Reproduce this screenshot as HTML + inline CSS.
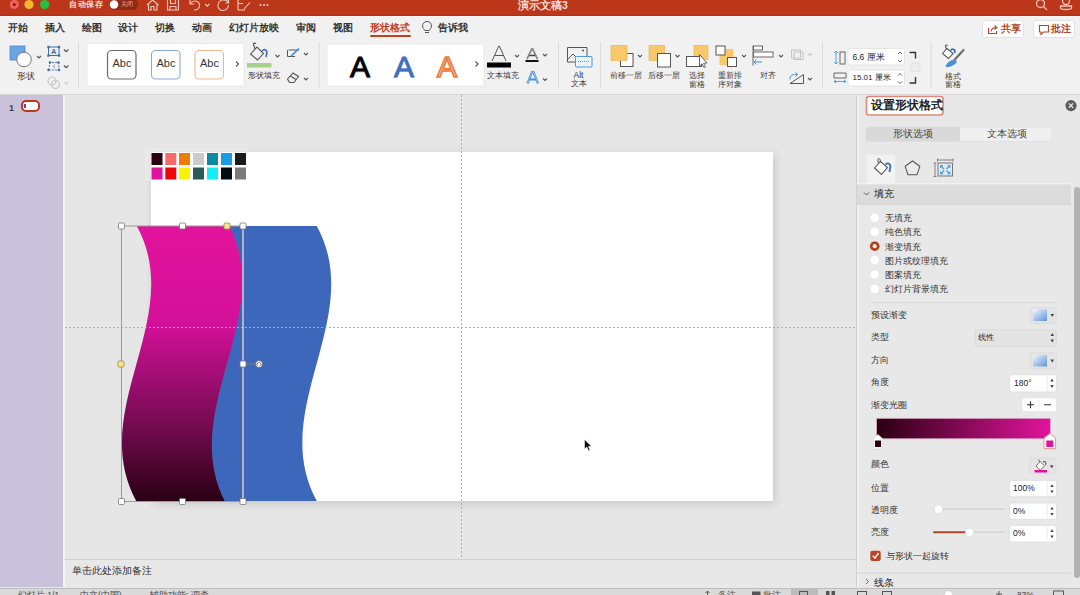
<!DOCTYPE html>
<html><head><meta charset="utf-8">
<style>
*{margin:0;padding:0;box-sizing:border-box}
html,body{width:1080px;height:595px;overflow:hidden;background:#e6e6e6;font-family:"Liberation Sans",sans-serif;color:#333}
.a{position:absolute}
.t{position:absolute;white-space:nowrap;line-height:1}
#title{left:0;top:0;width:1080px;height:16px;background:#bc371a;border-bottom:1px solid #a9321c}
#tabs{left:0;top:16px;width:1080px;height:24px;background:#f1f1f1;border-top:1px solid #fdf6f5}
#ribbon{left:0;top:40px;width:1080px;height:55px;background:#f1f1f1;border-bottom:1px solid #d6d6d6}
#thumbs{left:0;top:95px;width:63px;height:492px;background:#cac2da}
#thumbline{left:63px;top:95px;width:2px;height:492px;background:#f4f4f4}
#canvas{left:65px;top:95px;width:793px;height:463px;background:#e6e6e6}
#notes{left:65px;top:558.5px;width:791px;height:29px;background:#e8e8e8;border-top:1px solid #d0d0d0}
#status{left:0;top:587.5px;width:1080px;height:8px;background:#dadada;border-top:1px solid #bdbdbd}
#pane{left:856px;top:95px;width:224px;height:492px;background:#e8e8e8;border-left:1px solid #d2d2d2;box-shadow:inset 2px 0 0 #efefef}
#slide{left:151px;top:152px;width:622px;height:349px;background:#fff;box-shadow:2px 3px 9px rgba(0,0,0,.13)}
</style></head><body>
<div class="a" id="title">
<svg class="a" style="left:0;top:0" width="1080" height="16">
<circle cx="14.3" cy="4.5" r="4.6" fill="#f0605a"/><circle cx="14.3" cy="4.5" r="1.6" fill="#8a1a14"/>
<circle cx="29" cy="4.5" r="4.6" fill="#f6b52d"/>
<circle cx="44.6" cy="4.5" r="4.6" fill="#27c03f"/>
<rect x="109" y="-1" width="29" height="11" rx="5.5" fill="#8e2a17"/>
<circle cx="114" cy="4.5" r="4.3" fill="#fff"/>
<g fill="none" stroke="#f2c9bf" stroke-width="1.1">
<path d="M147,5 L152.5,0 L158.5,5 M148.5,4 L148.5,10 L151,10 L151,6.5 L154,6.5 L154,10 L157,10 L157,4"/>
<path d="M167.5,0 L167.5,10 L178.5,10 L178.5,0 M170.5,0 L170.5,3.5 L175.5,3.5 L175.5,0 M170,10 L170,6.5 L176,6.5 L176,10"/>
<path d="M190,0 L190,4 L194,4 M190,3.5 C194,-1 200,1 199.5,6 C199,9 196,10 194,10"/>
<path d="M205,4 L207.2,6.2 L209.4,4"/>
<path d="M228,2 C226,-1 219,-1 218,4.5 C217.5,8 220,10.5 223,10.5 C226,10.5 228.5,8 228.5,5 M228.5,0 L228.5,3 L225.5,3"/>
<path d="M238,0 L238,10 L245,10 M238,3.5 L243,3.5 M244,9 L250,2.5"/>
</g>
<g fill="#f2c9bf"><circle cx="260.5" cy="5" r="1.1"/><circle cx="264" cy="5" r="1.1"/><circle cx="267.5" cy="5" r="1.1"/></g>
<g fill="none" stroke="#f2c9bf" stroke-width="1.3"><circle cx="1040.5" cy="3.5" r="4"/><path d="M1043.5,6.5 L1047,10"/>
<circle cx="1066" cy="1" r="3.5"/><path d="M1060.5,6 L1060.5,8 C1060.5,10 1071.5,10 1071.5,8 L1071.5,6 Z"/></g>
</svg>
<div class="t" style="left:69px;top:0px;font-size:8.4px;color:#f8ddd5;font-weight:600;width:4em;text-align-last:justify">自动保存</div>
<div class="t" style="left:121px;top:1px;font-size:6px;color:#e8b8ac;width:2em;text-align-last:justify">关闭</div>
<div class="t" style="left:518px;top:-0.5px;font-size:10.5px;font-weight:bold;color:#f7ddd6">演示文稿3</div>
</div>
<div class="a" id="tabs">
<div class="t" style="left:8px;top:5.5px;font-size:10px;color:#333;font-weight:600;width:2em;text-align-last:justify">开始</div>
<div class="t" style="left:45px;top:5.5px;font-size:10px;color:#333;font-weight:600;width:2em;text-align-last:justify">插入</div>
<div class="t" style="left:82px;top:5.5px;font-size:10px;color:#333;font-weight:600;width:2em;text-align-last:justify">绘图</div>
<div class="t" style="left:118px;top:5.5px;font-size:10px;color:#333;font-weight:600;width:2em;text-align-last:justify">设计</div>
<div class="t" style="left:155px;top:5.5px;font-size:10px;color:#333;font-weight:600;width:2em;text-align-last:justify">切换</div>
<div class="t" style="left:192px;top:5.5px;font-size:10px;color:#333;font-weight:600;width:2em;text-align-last:justify">动画</div>
<div class="t" style="left:229px;top:5.5px;font-size:10px;color:#333;font-weight:600;width:5em;text-align-last:justify">幻灯片放映</div>
<div class="t" style="left:296px;top:5.5px;font-size:10px;color:#333;font-weight:600;width:2em;text-align-last:justify">审阅</div>
<div class="t" style="left:333px;top:5.5px;font-size:10px;color:#333;font-weight:600;width:2em;text-align-last:justify">视图</div>
<div class="t" style="left:369.5px;top:5.5px;font-size:10px;color:#c3401f;font-weight:bold;width:4em;text-align-last:justify">形状格式</div>
<div class="a" style="left:369.5px;top:18px;width:41px;height:2px;background:#c3401f;border-radius:1px"></div>
<svg class="a" style="left:420px;top:3px" width="14" height="16"><path d="M7,1.5 C4,1.5 2.5,3.8 2.5,6 C2.5,8 4.2,9 4.8,10.5 L9.2,10.5 C9.8,9 11.5,8 11.5,6 C11.5,3.8 10,1.5 7,1.5 Z M5,12.5 L9,12.5" fill="none" stroke="#555" stroke-width="1"/></svg>
<div class="t" style="left:438px;top:5.5px;font-size:10px;color:#333;font-weight:600;width:3em;text-align-last:justify">告诉我</div>
<div class="a" style="left:982px;top:2.5px;width:42px;height:18px;background:#fff;border:1px solid #e2e2e2;border-radius:3px"></div>
<svg class="a" style="left:987px;top:7px" width="12" height="11"><path d="M1.5,4 L1.5,9.5 L9.5,9.5 L9.5,7 M4,7.5 C4.5,4.5 6.5,3.5 9,3.5 M7.5,1.5 L10,3.5 L7.5,5.5" fill="none" stroke="#b5452a" stroke-width="1.1"/></svg>
<div class="t" style="left:1001px;top:6.5px;font-size:10px;color:#b5452a;font-weight:bold;width:2em;text-align-last:justify">共享</div>
<div class="a" style="left:1033px;top:2.5px;width:42px;height:18px;background:#fff;border:1px solid #e2e2e2;border-radius:3px"></div>
<svg class="a" style="left:1038px;top:6.5px" width="12" height="12"><path d="M1.5,1.5 L10.5,1.5 L10.5,8 L5.5,8 L3,10.5 L3,8 L1.5,8 Z" fill="none" stroke="#b5452a" stroke-width="1.1"/></svg>
<div class="t" style="left:1051px;top:6.5px;font-size:10px;color:#b5452a;font-weight:bold;width:2em;text-align-last:justify">批注</div>
</div>
<div class="a" id="ribbon">
<svg class="a" style="left:0;top:0" width="1080" height="54">
<!-- shapes -->
<rect x="10" y="6" width="15" height="14" fill="#6aa5e6" stroke="#4f86c8" stroke-width="0.8"/>
<circle cx="24" cy="19.5" r="7.3" fill="#fff" stroke="#777" stroke-width="1"/>
<path d="M37,16 L39,18 L41,16" fill="none" stroke="#555" stroke-width="1.1"/>
<rect x="48.5" y="7" width="10.5" height="8.5" fill="none" stroke="#3f6fa8" stroke-width="1"/>
<g fill="#3f6fa8"><rect x="47.3" y="5.8" width="2.4" height="2.4"/><rect x="57.8" y="5.8" width="2.4" height="2.4"/><rect x="47.3" y="14.3" width="2.4" height="2.4"/><rect x="57.8" y="14.3" width="2.4" height="2.4"/></g>
<text x="51" y="14" font-size="7.5" fill="#3f6fa8" font-family="Liberation Sans" font-weight="bold">A</text>
<path d="M64,9.5 L66.2,11.7 L68.4,9.5" fill="none" stroke="#555" stroke-width="1.2"/>
<path d="M48.5,30 L50,22.5 L58.5,22.5 L59,30 Z" fill="none" stroke="#3f6fa8" stroke-width="0.9" stroke-dasharray="2,1.2"/>
<path d="M55,25 C53,25.5 53,27.5 55,28" fill="none" stroke="#3f6fa8" stroke-width="0.8"/>
<g fill="#3f6fa8"><circle cx="48.5" cy="30" r="1.3"/><circle cx="59" cy="30" r="1.3"/><circle cx="50" cy="22.5" r="1.3"/><circle cx="58.5" cy="22.5" r="1.3"/></g>
<path d="M64,25.5 L66.2,27.7 L68.4,25.5" fill="none" stroke="#555" stroke-width="1.2"/>
<g fill="none" stroke="#c4c4c4" stroke-width="1.2"><circle cx="52" cy="41" r="4"/><circle cx="55.5" cy="44.5" r="4"/></g>
<path d="M64,42 L66.2,44.2 L68.4,42" fill="none" stroke="#cfcfcf" stroke-width="1.2"/>
<line x1="78.5" y1="2" x2="78.5" y2="48" stroke="#dcdcdc"/>
<!-- gallery -->
<rect x="87" y="3.5" width="157" height="42.5" fill="#fff" stroke="#e6e6e6" stroke-width="0.8"/>
<rect x="107.5" y="10.5" width="28.5" height="28.5" rx="4" fill="#fff" stroke="#6b6b6b" stroke-width="1.2"/>
<rect x="151.5" y="10.5" width="28.5" height="28.5" rx="4" fill="#fff" stroke="#8aa8d4" stroke-width="1.1"/>
<rect x="195" y="10.5" width="28.5" height="28.5" rx="4" fill="#fff" stroke="#f0b68c" stroke-width="1.1"/>
<path d="M236,21.5 L238.5,24 L236,26.5" fill="none" stroke="#555" stroke-width="1.1"/>
<!-- shape fill -->
<path d="M250.5,14 L257,7 L263.5,13.5 L257.5,20 Z M255,9 L253.5,4.5 C253,3 255,2.5 255.7,4" fill="none" stroke="#555" stroke-width="1.1"/>
<path d="M262,11 C265,8 268,11 266.5,14.5 L266,17" fill="none" stroke="#3d6fb5" stroke-width="1.6"/>
<rect x="247" y="23" width="24.5" height="4.5" fill="#a7d18b"/>
<path d="M275.5,15 L277.5,17 L279.5,15" fill="none" stroke="#555" stroke-width="1.1"/>
<path d="M287.5,10 L287.5,16.5 L295,16.5 M288.5,10 L299,10 M292,15.5 L298,9" fill="none" stroke="#555" stroke-width="1"/>
<path d="M291,16 L299,8.5" stroke="#3d8fd8" stroke-width="1.6"/>
<path d="M304,13 L306,15 L308,13" fill="none" stroke="#555" stroke-width="1.1"/>
<path d="M287.5,39 L293,33 L298.5,36.5 L294,42.5 L289.5,42.5 Z M290.5,36 L296,39.5" fill="none" stroke="#555" stroke-width="1.1"/>
<path d="M304,38 L306,40 L308,38" fill="none" stroke="#555" stroke-width="1.1"/>
<line x1="319" y1="2" x2="319" y2="48" stroke="#dcdcdc"/>
<!-- wordart -->
<rect x="327" y="4" width="157" height="42" fill="#fff" stroke="#e6e6e6" stroke-width="0.8"/>
<path d="M475.5,21.5 L478,24 L475.5,26.5" fill="none" stroke="#555" stroke-width="1.1"/>
<path d="M492,21 L498.8,6 L499.4,6 L506,21 M494.5,15.5 L503.5,15.5" fill="none" stroke="#444" stroke-width="0.9"/>
<rect x="487" y="22.5" width="24" height="5" fill="#000"/>
<path d="M515,15 L517,17 L519,15" fill="none" stroke="#555" stroke-width="1.1"/>
<path d="M527,19 L531.8,9 L532.6,9 L537.5,19 M528.8,15.5 L535.8,15.5" fill="none" stroke="#444" stroke-width="1.6"/>
<path d="M527,19 L531.8,9 L532.6,9 L537.5,19" fill="none" stroke="#fff" stroke-width="0.5"/>
<rect x="525.5" y="20" width="13" height="2" fill="#111"/>
<path d="M543,14 L545,16 L547,14" fill="none" stroke="#555" stroke-width="1.1"/>
<path d="M527.5,43.5 L532,32 L533.5,32 L538,43.5 M529.5,39.5 L536,39.5" fill="none" stroke="#4a90d9" stroke-width="2.2"/>
<path d="M527.5,43.5 L532,32 L533.5,32 L538,43.5" fill="none" stroke="#bfe0ff" stroke-width="0.6"/>
<path d="M543,38.5 L545,40.5 L547,38.5" fill="none" stroke="#555" stroke-width="1.1"/>
<line x1="558.5" y1="2" x2="558.5" y2="48" stroke="#dcdcdc"/>
<!-- alt text -->
<path d="M567.5,7.5 L587,7.5 L587,17 M567.5,7.5 L567.5,22 L576,22 M568,19 L573,14 L577,18" fill="none" stroke="#555" stroke-width="1"/>
<circle cx="583" cy="10.5" r="1" fill="#555"/>
<rect x="575.5" y="16.5" width="16.5" height="10.5" rx="1" fill="#e9f3fb" stroke="#4f9ad5" stroke-width="1"/>
<path d="M578,21.5 L590,21.5" stroke="#4f9ad5" stroke-width="1" stroke-dasharray="1,1"/>
<line x1="600.5" y1="2" x2="600.5" y2="48" stroke="#dcdcdc"/>
<!-- bring forward -->
<rect x="620.5" y="13.5" width="12.5" height="13" fill="#fff" stroke="#555" stroke-width="1"/>
<rect x="611" y="5.5" width="16" height="15" fill="#f8c86a" stroke="#e6b04c" stroke-width="0.6"/>
<path d="M638,15 L640,17 L642,15" fill="none" stroke="#555" stroke-width="1.1"/>
<!-- send backward -->
<rect x="649" y="5.5" width="15.5" height="15" fill="#f8c86a" stroke="#e6b04c" stroke-width="0.6"/>
<rect x="657.5" y="13.5" width="13" height="13.5" fill="#fff" stroke="#555" stroke-width="1"/>
<path d="M675.5,15 L677.5,17 L679.5,15" fill="none" stroke="#555" stroke-width="1.1"/>
<!-- selection pane -->
<rect x="694" y="5.5" width="14" height="14" fill="#f8c86a" stroke="#e6b04c" stroke-width="0.6"/>
<rect x="686.5" y="16.5" width="15" height="10" fill="#fff" stroke="#555" stroke-width="1"/>
<path d="M699.5,14.5 L699.5,26 L702,23.8 L704,27.5 L705.5,26.8 L703.6,23.2 L707,23 Z" fill="#fff" stroke="#555" stroke-width="0.9"/>
<!-- reorder -->
<rect x="719.5" y="9" width="14" height="16" fill="#f8c86a"/>
<rect x="716" y="6" width="9" height="9" fill="#fff" stroke="#555" stroke-width="1"/>
<rect x="727.5" y="17.5" width="9" height="9" fill="#fff" stroke="#555" stroke-width="1"/>
<path d="M742,15 L744,17 L746,15" fill="none" stroke="#555" stroke-width="1.1"/>
<!-- align -->
<path d="M753,5.5 L753,25.5" stroke="#666" stroke-width="1"/>
<rect x="753.5" y="6" width="9" height="4" fill="#fff" stroke="#666" stroke-width="1"/>
<rect x="753.5" y="12" width="19.5" height="5" fill="#fff" stroke="#666" stroke-width="1"/>
<path d="M754,22 L762,22 M756.5,19.5 L754,22 L756.5,24.5" fill="none" stroke="#4a8fd6" stroke-width="1"/>
<path d="M779,15 L781,17 L783,15" fill="none" stroke="#555" stroke-width="1.1"/>
<!-- group -->
<g fill="none" stroke="#c4c4c4" stroke-width="1"><rect x="791.5" y="10" width="9" height="8"/><rect x="794" y="12" width="9" height="7.5"/></g>
<path d="M808,13.5 L810,15.5 L812,13.5" fill="none" stroke="#c8c8c8" stroke-width="1.1"/>
<!-- rotate -->
<path d="M790,43.5 L803.5,43.5 L803.5,34.5 Z" fill="none" stroke="#555" stroke-width="1"/>
<path d="M790,39.5 C790,35 793,34 797.5,34.5 M795.5,32.5 L797.8,34.5 L795.5,36.5" fill="none" stroke="#4a8fd6" stroke-width="1"/>
<path d="M808,38 L810,40 L812,38" fill="none" stroke="#555" stroke-width="1.1"/>
<line x1="822.5" y1="2" x2="822.5" y2="48" stroke="#dcdcdc"/>
<!-- size -->
<g fill="none" stroke="#666" stroke-width="1"><rect x="840" y="12" width="5" height="12"/></g>
<path d="M836,11 L836,24 M834,13 L836,11 L838,13 M834,22 L836,24 L838,22" fill="none" stroke="#4a9ad8" stroke-width="0.9"/>
<g fill="none" stroke="#666" stroke-width="1"><path d="M834,33 L846,33 M834,38 L846,38 M834,33 L834,38 M846,33 L846,38"/></g>
<path d="M834,41.5 L846,41.5 M836,40 L834,41.5 L836,43 M844,40 L846,41.5 L844,43" fill="none" stroke="#4a9ad8" stroke-width="0.9"/>
<rect x="848" y="8.5" width="56.5" height="16.5" rx="2" fill="#fff" stroke="#e0e0e0" stroke-width="0.8"/>
<rect x="848" y="30" width="56.5" height="16" rx="2" fill="#fff" stroke="#e0e0e0" stroke-width="0.8"/>
<path d="M898,14 L900,12 L902,14 M898,20 L900,22 L902,20 M898,35.5 L900,33.5 L902,35.5 M898,41.5 L900,43.5 L902,41.5" fill="none" stroke="#555" stroke-width="0.9"/>
<path d="M909.5,12.5 L915.5,12.5 L915.5,18.5 M909.5,43 L915.5,43 L915.5,37" fill="none" stroke="#333" stroke-width="1.4"/>
<rect x="910.5" y="23" width="9.5" height="8.5" rx="2" fill="#ececec" stroke="#dedede" stroke-width="0.8"/>
<line x1="931" y1="2" x2="931" y2="48" stroke="#dcdcdc"/>
<!-- format pane -->
<path d="M942.5,13.5 L947,8.5 L953,13.5 L948.5,18.5 Z M946.5,9.5 L945.5,6 C945.3,5 947,4.5 947.5,5.8" fill="#fff" stroke="#555" stroke-width="1.1"/>
<path d="M950.5,10.5 C952.5,8 956,9.5 954.5,13" fill="none" stroke="#3d6fb5" stroke-width="1.7"/>
<path d="M963.5,10 L953.5,21" stroke="#6e6e6e" stroke-width="2.2" stroke-linecap="round"/>
<path d="M955,19.5 C950,20 946,23 945.5,27 C950,27.5 955,25 957,22 Z" fill="#4f8fd0"/>
</svg>
<div class="t" style="left:17px;top:32px;font-size:8.5px;color:#3a3a3a;font-weight:500;width:2em;text-align-last:justify">形状</div>
<div class="t" style="left:112.5px;top:18px;font-size:11px;color:#333;font-family:'Liberation Sans'">Abc</div>
<div class="t" style="left:156.5px;top:18px;font-size:11px;color:#333;font-family:'Liberation Sans'">Abc</div>
<div class="t" style="left:200.0px;top:18px;font-size:11px;color:#333;font-family:'Liberation Sans'">Abc</div>
<div class="t" style="left:248px;top:32px;font-size:7.8px;color:#3a3a3a;font-weight:500;width:4em;text-align-last:justify">形状填充</div>
<div class="t" style="left:350px;top:12px;font-size:30px;color:#000;font-family:'Liberation Sans';-webkit-text-stroke:.9px #000;text-shadow:0 1px 2px rgba(0,0,0,.35)">A</div>
<div class="t" style="left:394px;top:12px;font-size:30px;color:#3f6fc0;font-family:'Liberation Sans';-webkit-text-stroke:.9px #3f6fc0;text-shadow:0 1px 1px rgba(0,0,0,.2)">A</div>
<div class="t" style="left:437px;top:12px;font-size:30px;color:#f9c6a2;font-family:'Liberation Sans';-webkit-text-stroke:1.6px #ee7a3c">A</div>
<div class="t" style="left:487px;top:31.5px;font-size:7.8px;color:#3a3a3a;font-weight:500;width:4em;text-align-last:justify">文本填充</div>
<div class="t" style="left:573.5px;top:31px;font-size:8.5px;color:#333;font-family:'Liberation Sans'">Alt</div>
<div class="t" style="left:571px;top:40px;font-size:8px;color:#3a3a3a;font-weight:500;width:2em;text-align-last:justify">文本</div>
<div class="t" style="left:610px;top:32px;font-size:7.8px;color:#3a3a3a;font-weight:500;width:4em;text-align-last:justify">前移一层</div>
<div class="t" style="left:647.5px;top:32px;font-size:7.8px;color:#3a3a3a;font-weight:500;width:4em;text-align-last:justify">后移一层</div>
<div class="t" style="left:689px;top:32px;font-size:7.8px;color:#3a3a3a;font-weight:500;width:2em;text-align-last:justify">选择</div>
<div class="t" style="left:689px;top:40.5px;font-size:7.8px;color:#3a3a3a;font-weight:500;width:2em;text-align-last:justify">窗格</div>
<div class="t" style="left:718px;top:32px;font-size:7.8px;color:#3a3a3a;font-weight:500;width:3em;text-align-last:justify">重新排</div>
<div class="t" style="left:718px;top:40.5px;font-size:7.8px;color:#3a3a3a;font-weight:500;width:3em;text-align-last:justify">序对象</div>
<div class="t" style="left:760px;top:32px;font-size:7.8px;color:#3a3a3a;font-weight:500;width:2em;text-align-last:justify">对齐</div>
<div class="t" style="left:852.5px;top:12.5px;font-size:8.5px;color:#222;font-weight:500">6.6 厘米</div>
<div class="t" style="left:852.5px;top:33.5px;font-size:8px;color:#222;font-weight:500">15.01 厘米</div>
<div class="t" style="left:944.5px;top:32.5px;font-size:7.8px;color:#3a3a3a;font-weight:500;width:2em;text-align-last:justify">格式</div>
<div class="t" style="left:944.5px;top:41px;font-size:7.8px;color:#3a3a3a;font-weight:500;width:2em;text-align-last:justify">窗格</div>
</div>
<div class="a" id="thumbs"></div>
<div class="a" id="thumbline"></div>
<div class="a" id="canvas"></div>
<div class="a" id="slide"></div>
<svg class="a" style="left:0;top:0" width="1080" height="595" viewBox="0 0 1080 595">
<defs><linearGradient id="mg" x1="0" y1="0" x2="0" y2="1">
<stop offset="0" stop-color="#e2139c"/><stop offset="0.35" stop-color="#d4109a"/><stop offset="0.75" stop-color="#6e0a4c"/><stop offset="1" stop-color="#2a0012"/></linearGradient></defs>
<rect x="145" y="148" width="103" height="33" fill="#fff" opacity=".22"/><rect x="151" y="152" width="97" height="29" fill="#fff"/>
<g>
<rect x="151.5" y="153" width="11" height="12" fill="#2c0213"/>
<rect x="165.3" y="153" width="11" height="12" fill="#f56b6b"/>
<rect x="179" y="153" width="11" height="12" fill="#ef7a06"/>
<rect x="193" y="153" width="11" height="12" fill="#c9cbcc"/>
<rect x="207" y="153" width="11" height="12" fill="#0c8aa2"/>
<rect x="221" y="153" width="11" height="12" fill="#1a9be9"/>
<rect x="235" y="153" width="11" height="12" fill="#1b1b1b"/>
<rect x="151.5" y="167.5" width="11" height="12" fill="#e0129f"/>
<rect x="165.3" y="167.5" width="11" height="12" fill="#ee0505"/>
<rect x="179" y="167.5" width="11" height="12" fill="#fbf200"/>
<rect x="193" y="167.5" width="11" height="12" fill="#2b5a5a"/>
<rect x="207" y="167.5" width="11" height="12" fill="#12eef6"/>
<rect x="221" y="167.5" width="11" height="12" fill="#050b12"/>
<rect x="235" y="167.5" width="11" height="12" fill="#7a7a7a"/>
</g>
<path d="M210,226 C260,317.7 160,409.3 210,501 L316.8,501 C266.8,409.3 366.8,317.7 316.8,226 Z" fill="#3d67bb"/>
<path d="M136.8,226 C186.8,317.7 86.5,409.3 136.2,501 L224.6,501 C178.6,409.3 275.4,317.7 229.4,226 Z" fill="url(#mg)"/>
<g stroke="#b0b0b0" stroke-width="1" stroke-dasharray="2,2" fill="none">
<line x1="461.5" y1="95" x2="461.5" y2="558"/>
<line x1="65" y1="327.5" x2="856" y2="327.5"/>
</g>
<g fill="none" stroke="#9a9a9a" stroke-width="1">
<rect x="121.5" y="226" width="121.5" height="275.5"/>
</g>
<line x1="243" y1="226" x2="243" y2="501" stroke="#d8d8d8" stroke-width="1.2"/>
<line x1="243" y1="364" x2="256" y2="364" stroke="#888" stroke-width="0.8"/>
<g fill="#fff" stroke="#777" stroke-width="0.8">
<rect x="118.5" y="223" width="6" height="6" rx="1"/>
<rect x="179.5" y="223" width="6" height="6" rx="1"/>
<rect x="240" y="223" width="6" height="6" rx="1"/>
<rect x="118.5" y="498.5" width="6" height="6" rx="1"/>
<rect x="179.5" y="498.5" width="6" height="6" rx="1"/>
<rect x="240" y="498.5" width="6" height="6" rx="1"/>
<rect x="240" y="361" width="6" height="6" rx="1"/>
</g>
<g fill="#fde08a" stroke="#a08a50" stroke-width="0.8">
<rect x="118" y="361" width="6" height="6" rx="1"/>
<rect x="224" y="223" width="6" height="6" rx="1"/>
</g>
<circle cx="259" cy="364" r="3.5" fill="#fff" stroke="#666" stroke-width="0.9"/>
<path d="M257.5,365.5 a1.8,1.8 0 1 1 2.5,0.3" fill="none" stroke="#555" stroke-width="0.8"/>
<path d="M584.5,439.5 L584.5,449 L586.8,447 L588.5,450.8 L590,450.2 L588.4,446.5 L591.5,446.3 Z" fill="#111" stroke="#fff" stroke-width="0.5"/>
</svg>
<div class="a" id="notes"></div>
<div class="a" id="pane"></div>
<svg class="a" style="left:0;top:0" width="1080" height="595">
<rect x="866.5" y="96.5" width="76.5" height="18.5" rx="2.5" fill="#fff" stroke="#d98a78" stroke-width="1.6"/>
<circle cx="1071" cy="105.6" r="5.6" fill="#5c5c5c"/>
<path d="M1068.8,103.4 L1073.2,107.8 M1073.2,103.4 L1068.8,107.8" stroke="#e8e8e8" stroke-width="1.3"/>
<rect x="866" y="127" width="186" height="14.5" rx="2" fill="#efefef" stroke="#dedede" stroke-width="0.7"/>
<rect x="866" y="127" width="94" height="14.5" rx="2" fill="#d9d9d9"/>
<rect x="867" y="155" width="28" height="29" fill="#f2f2f2"/>
<path d="M874.5,168 L880.5,161.5 L887.5,167.5 L881.5,174.5 Z" fill="#fff" stroke="#555" stroke-width="1.1"/>
<path d="M878.5,163.5 L877.8,159.8 C877.5,158.5 879.5,158 880,159.5 L880.6,161.8" fill="none" stroke="#555" stroke-width="1"/>
<path d="M885.5,164.5 C888.5,162 891.5,164.5 890,168.5 L889.5,172" fill="none" stroke="#3d6fb5" stroke-width="1.8"/>
<path d="M912.5,161 L919.8,166.3 L917,174.8 L908,174.8 L905.2,166.3 Z" fill="#fff" fill-opacity=".15" stroke="#555" stroke-width="1.1"/>
<rect x="938" y="163" width="14.5" height="13" fill="#dfeaf3" stroke="#777" stroke-width="1"/>
<path d="M937.5,160 L953,160 M937.5,158.5 L937.5,161.5 M953,158.5 L953,161.5 M935,163 L935,176.5 M933.5,163 L936.5,163 M933.5,176.5 L936.5,176.5" fill="none" stroke="#777" stroke-width="0.9"/>
<path d="M941,166 L944,169 M949.5,166 L946.5,169 M941,173.5 L944,170.5 M949.5,173.5 L946.5,170.5" stroke="#3f9ad6" stroke-width="1.2"/>
<path d="M940.5,168 L940.5,165.5 L943,165.5 M950,168 L950,165.5 L947.5,165.5 M940.5,171.5 L940.5,174 L943,174 M950,171.5 L950,174 L947.5,174" fill="none" stroke="#3f9ad6" stroke-width="0.9"/>
<line x1="857" y1="183.8" x2="1071" y2="183.8" stroke="#f7f7f7" stroke-width="1"/>
<rect x="857" y="184.5" width="214" height="20" fill="#dcdcdc"/>
<line x1="857" y1="204.2" x2="1071" y2="204.2" stroke="#cfcfcf" stroke-width="0.8"/>
<path d="M864,192.5 L866.5,195 L869,192.5" fill="none" stroke="#555" stroke-width="1"/>
<rect x="1074" y="187" width="6" height="391" rx="3" fill="#b3b3b3"/>
<g fill="#fff" stroke="#e0e0e0" stroke-width="0.5">
<circle cx="874.7" cy="217.8" r="4.6"/><circle cx="874.7" cy="231.8" r="4.6"/>
<circle cx="874.7" cy="260.1" r="4.6"/><circle cx="874.7" cy="274.5" r="4.6"/><circle cx="874.7" cy="288.9" r="4.6"/>
</g>
<circle cx="874.7" cy="246.2" r="4.8" fill="#b53c1f"/><circle cx="874.7" cy="246.2" r="2.1" fill="#fff6d8"/>
<line x1="870" y1="302.5" x2="1056" y2="302.5" stroke="#d8d8d8" stroke-width="0.8"/>
<rect x="1030" y="307.6" width="26.4" height="15.8" rx="2.5" fill="#e4e4e4" stroke="#d6d6d6" stroke-width="0.6"/>
<defs><linearGradient id="bl" x1="0" y1="0" x2="1" y2="1"><stop offset="0" stop-color="#f0f6ff"/><stop offset="1" stop-color="#5f95d8"/></linearGradient>
<linearGradient id="gs" x1="0" y1="0" x2="1" y2="0"><stop offset="0" stop-color="#2a0012"/><stop offset="1" stop-color="#e2139c"/></linearGradient></defs>
<rect x="1033" y="309.5" width="14" height="11.5" fill="url(#bl)"/>
<path d="M1050.5,314 L1054,314 L1052.25,317 Z" fill="#444"/>
<rect x="975" y="329.7" width="81.4" height="16.8" rx="2.5" fill="#e4e4e4" stroke="#d4d4d4" stroke-width="0.6"/>
<path d="M1050.5,336 L1054,336 L1052.25,333 Z M1050.5,339.5 L1054,339.5 L1052.25,342.5 Z" fill="#444"/>
<rect x="1030" y="352.8" width="26.4" height="16.2" rx="2.5" fill="#e4e4e4" stroke="#d6d6d6" stroke-width="0.6"/>
<rect x="1033" y="355" width="14" height="11.5" fill="url(#bl)"/>
<path d="M1050.5,359.5 L1054,359.5 L1052.25,362.5 Z" fill="#444"/>
<rect x="1009.6" y="374.8" width="46.8" height="17.2" rx="2.5" fill="#fff" stroke="#d8d8d8" stroke-width="0.7"/>
<line x1="1047" y1="376" x2="1047" y2="391" stroke="#e4e4e4" stroke-width="0.8"/>
<path d="M1050.3,381.5 L1053.7,381.5 L1052,378.5 Z M1050.3,385 L1053.7,385 L1052,388 Z" fill="#444"/>
<rect x="1022" y="398" width="34.4" height="13.6" rx="2.5" fill="#fff" stroke="#e0e0e0" stroke-width="0.6"/>
<path d="M1027,404.8 L1034,404.8 M1030.5,401.3 L1030.5,408.3 M1044,404.8 L1051,404.8" stroke="#333" stroke-width="1.1"/>
<line x1="1039" y1="400" x2="1039" y2="410" stroke="#e6e6e6" stroke-width="0.6"/>
<rect x="876.5" y="418.3" width="174" height="20.5" fill="url(#gs)" stroke="#d8b4cc" stroke-width="0.8"/>
<path d="M873.5,449 L873.5,438.5 L878,434.5 L882.5,438.5 L882.5,449 Z" fill="#fff" stroke="#d0d0d0" stroke-width="0.6"/>
<rect x="875" y="440.5" width="6" height="6.5" fill="#2a0012"/>
<path d="M1044,448.6 L1044,438 L1049.8,433.5 L1055.6,438 L1055.6,448.6 Z" fill="#fff" stroke="#e0866a" stroke-width="0.8"/>
<rect x="1046.3" y="440.5" width="7" height="6.5" fill="#e2139c"/>
<rect x="1029.7" y="457.7" width="26" height="16.1" rx="2.5" fill="#e4e4e4" stroke="#d6d6d6" stroke-width="0.6"/>
<path d="M1036,466 L1040.3,461.5 L1044.6,466 L1040.3,470 Z M1039.5,462 L1038.8,459.5" fill="#fff" stroke="#555" stroke-width="0.8"/>
<path d="M1043,462 C1045,460.5 1046.5,462.5 1045.5,465" fill="none" stroke="#3d6fb5" stroke-width="1.2"/>
<rect x="1034.5" y="470" width="12.5" height="2.5" fill="#e2139c"/>
<path d="M1050,465.2 L1053.5,465.2 L1051.75,468.2 Z" fill="#444"/>
<rect x="1009.4" y="480.4" width="47" height="16.4" rx="2.5" fill="#fff" stroke="#d8d8d8" stroke-width="0.7"/>
<rect x="1009.4" y="503" width="47" height="16.4" rx="2.5" fill="#fff" stroke="#d8d8d8" stroke-width="0.7"/>
<rect x="1009.4" y="525.4" width="47" height="16.6" rx="2.5" fill="#fff" stroke="#d8d8d8" stroke-width="0.7"/>
<g stroke="#e4e4e4" stroke-width="0.8"><line x1="1047" y1="481.5" x2="1047" y2="495.5"/><line x1="1047" y1="504" x2="1047" y2="518.5"/><line x1="1047" y1="526.5" x2="1047" y2="541"/></g>
<g fill="#444">
<path d="M1050.3,487 L1053.7,487 L1052,484.2 Z M1050.3,490.5 L1053.7,490.5 L1052,493.3 Z"/>
<path d="M1050.3,509.5 L1053.7,509.5 L1052,506.7 Z M1050.3,513 L1053.7,513 L1052,515.8 Z"/>
<path d="M1050.3,532 L1053.7,532 L1052,529.2 Z M1050.3,535.5 L1053.7,535.5 L1052,538.3 Z"/>
</g>
<rect x="938" y="508.3" width="67" height="1.6" rx="0.8" fill="#d6d6d6"/>
<circle cx="938.5" cy="509.2" r="4.2" fill="#fff" stroke="#d0d0d0" stroke-width="0.5"/>
<rect x="933" y="531.4" width="72" height="1.6" rx="0.8" fill="#d6d6d6"/>
<rect x="933" y="531.2" width="36" height="2" rx="1" fill="#b5452a"/>
<circle cx="969.5" cy="532.2" r="4.2" fill="#fff" stroke="#d0d0d0" stroke-width="0.5"/>
<rect x="870.3" y="550.7" width="10.4" height="10.4" rx="2" fill="#b94322"/>
<path d="M872.8,555.8 L875,558.2 L878.5,553" fill="none" stroke="#fff" stroke-width="1.4"/>
<line x1="857" y1="573" x2="1071" y2="573" stroke="#d0d0d0" stroke-width="0.8"/>
<path d="M866,579 L868.5,581.5 L866,584" fill="none" stroke="#666" stroke-width="1"/>
</svg>
<div class="t" style="left:870.5px;top:100px;font-size:11.5px;color:#222;font-weight:bold;width:6em;text-align-last:justify">设置形状格式</div>
<div class="t" style="left:893px;top:129px;font-size:9.5px;color:#444;font-weight:500;width:4em;text-align-last:justify">形状选项</div>
<div class="t" style="left:987px;top:129px;font-size:9.5px;color:#444;font-weight:500;width:4em;text-align-last:justify">文本选项</div>
<div class="t" style="left:874px;top:189px;font-size:9.5px;color:#222;font-weight:500;width:2em;text-align-last:justify">填充</div>
<div class="t" style="left:885px;top:214px;font-size:9px;color:#333;font-weight:500;width:3em;text-align-last:justify">无填充</div>
<div class="t" style="left:885px;top:228px;font-size:9px;color:#333;font-weight:500;width:4em;text-align-last:justify">纯色填充</div>
<div class="t" style="left:885px;top:242.5px;font-size:9px;color:#333;font-weight:500;width:4em;text-align-last:justify">渐变填充</div>
<div class="t" style="left:885px;top:256.5px;font-size:9px;color:#333;font-weight:500;width:7em;text-align-last:justify">图片或纹理填充</div>
<div class="t" style="left:885px;top:271px;font-size:9px;color:#333;font-weight:500;width:4em;text-align-last:justify">图案填充</div>
<div class="t" style="left:885px;top:285px;font-size:9px;color:#333;font-weight:500;width:7em;text-align-last:justify">幻灯片背景填充</div>
<div class="t" style="left:870.5px;top:310.5px;font-size:9px;color:#333;font-weight:500;width:4em;text-align-last:justify">预设渐变</div>
<div class="t" style="left:870.5px;top:333px;font-size:9px;color:#333;font-weight:500;width:2em;text-align-last:justify">类型</div>
<div class="t" style="left:978px;top:333.5px;font-size:8px;color:#222;font-weight:500;width:2em;text-align-last:justify">线性</div>
<div class="t" style="left:870.5px;top:356px;font-size:9px;color:#333;font-weight:500;width:2em;text-align-last:justify">方向</div>
<div class="t" style="left:870.5px;top:378px;font-size:9px;color:#333;font-weight:500;width:2em;text-align-last:justify">角度</div>
<div class="t" style="left:1014px;top:378.5px;font-size:8.5px;color:#222">180°</div>
<div class="t" style="left:870.5px;top:400.5px;font-size:9px;color:#333;font-weight:500;width:4em;text-align-last:justify">渐变光圈</div>
<div class="t" style="left:870.5px;top:460px;font-size:9px;color:#333;font-weight:500;width:2em;text-align-last:justify">颜色</div>
<div class="t" style="left:870.5px;top:483.5px;font-size:9px;color:#333;font-weight:500;width:2em;text-align-last:justify">位置</div>
<div class="t" style="left:1013px;top:484px;font-size:8.5px;color:#222">100%</div>
<div class="t" style="left:870.5px;top:506px;font-size:9px;color:#333;font-weight:500;width:3em;text-align-last:justify">透明度</div>
<div class="t" style="left:1013px;top:506.5px;font-size:8.5px;color:#222">0%</div>
<div class="t" style="left:870.5px;top:528px;font-size:9px;color:#333;font-weight:500;width:2em;text-align-last:justify">亮度</div>
<div class="t" style="left:1013px;top:529px;font-size:8.5px;color:#222">0%</div>
<div class="t" style="left:885.5px;top:551.5px;font-size:9px;color:#333;font-weight:500;width:7em;text-align-last:justify">与形状一起旋转</div>
<div class="t" style="left:873.5px;top:577.5px;font-size:10px;color:#222;font-weight:500;width:2em;text-align-last:justify">线条</div>
<div class="a" id="status"></div>
<div class="t" style="left:9px;top:103.5px;font-size:9px;color:#444;font-weight:bold;font-family:'Liberation Sans'">1</div>
<div class="a" style="left:21px;top:100.3px;width:19px;height:11.7px;border:2px solid #b8391f;border-radius:5px;background:#fff"></div>
<div class="a" style="left:24px;top:104px;width:2px;height:4px;background:#6a4aa0"></div>
<div class="t" style="left:72px;top:565.5px;font-size:9.7px;color:#333;font-weight:500;width:8em;text-align-last:justify">单击此处添加备注</div>
<svg class="a" style="left:0;top:587" width="1080" height="8">
<rect x="791" y="1.5" width="27" height="7" fill="#bcbcbc"/>
<g fill="none" stroke="#555" stroke-width="1"><rect x="799.5" y="4.5" width="8" height="6"/>
<rect x="857.5" y="4.5" width="9" height="6"/><rect x="882.5" y="4.5" width="9" height="6"/></g>
<rect x="826" y="4" width="3.5" height="5" fill="#555"/><rect x="831.5" y="4" width="3.5" height="5" fill="#555"/>
<path d="M705.5,6 L707.5,4 L709.5,6 M707.5,4 L707.5,9" fill="none" stroke="#555" stroke-width="1"/>
<rect x="752" y="4.5" width="8.5" height="5" fill="#555"/>
<circle cx="948.5" cy="8" r="4.2" fill="#fff" stroke="#bbb" stroke-width=".5"/>
<path d="M996,7 L1002,7 M999,4 L999,10" stroke="#555" stroke-width="1"/>
<rect x="1053.5" y="4" width="10" height="7" fill="none" stroke="#555" stroke-width="1"/>
</svg>
<div class="t" style="left:18px;top:590.5px;font-size:8.5px;color:#444;font-weight:500">幻灯片 1/1</div>
<div class="t" style="left:80px;top:590.5px;font-size:8.5px;color:#444;font-weight:500">中文(中国)</div>
<div class="t" style="left:150px;top:590.5px;font-size:8.5px;color:#444;font-weight:500">辅助功能: 调查</div>
<div class="t" style="left:718px;top:590.5px;font-size:8.5px;color:#444;font-weight:500;width:2em;text-align-last:justify">备注</div>
<div class="t" style="left:763px;top:590.5px;font-size:8.5px;color:#444;font-weight:500;width:2em;text-align-last:justify">批注</div>
<div class="t" style="left:1017px;top:590.5px;font-size:8.5px;color:#444">83%</div>
</body></html>
